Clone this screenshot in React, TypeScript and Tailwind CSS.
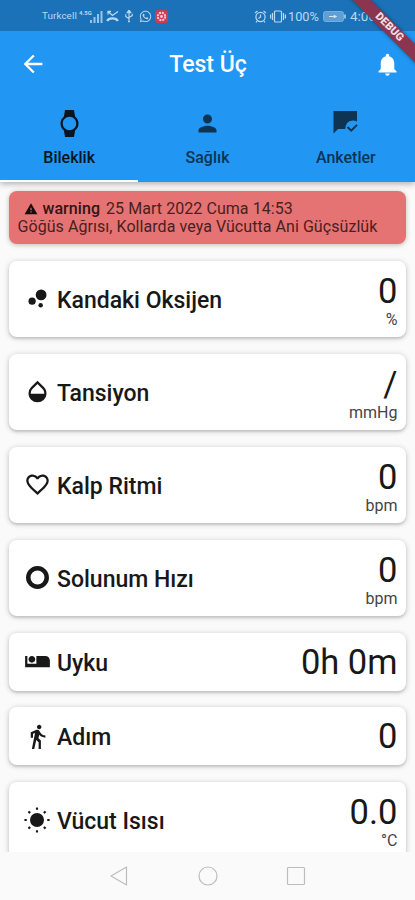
import React from "react";
import {
  MdAirlineSeatIndividualSuite,
  MdArrowBack,
  MdBubbleChart,
  MdDirectionsWalk,
  MdFavoriteBorder,
  MdNotifications,
  MdOpacity,
  MdPerson,
  MdWarning,
  MdWatch,
} from "react-icons/md";
import { FaWhatsapp } from "react-icons/fa";

type Metric = {
  label: string;
  value: string;
  unit?: string;
  icon: React.ReactNode;
};

function RingIcon() {
  return (
    <svg viewBox="0 0 24 24" className="size-[27px]" fill="none" stroke="currentColor" strokeWidth="4">
      <circle cx="12" cy="12" r="8.2" />
    </svg>
  );
}

function SunIcon() {
  const rays = [0, 45, 90, 135, 180, 225, 270, 315];
  return (
    <svg viewBox="0 0 28 28" className="-ml-px size-7" fill="currentColor">
      <circle cx="14" cy="14" r="7" />
      {rays.map((a) => (
        <rect key={a} x="12.900" y={a % 90 === 0 ? 1.4 : 1.9} width="2.200" height="2.400" rx="0.5" transform={`rotate(${a} 14 14)`} />
      ))}
    </svg>
  );
}

function ChatCheckIcon() {
  return (
    <svg viewBox="0 0 25 24" className="h-6 w-[25px]" fill="none">
      <path d="M.5 0H24v10.500c-5.500-3-11.500.5-11.500 6.500L12 18H5L.5 22.500z" fill="currentColor" />
      <path d="M14.500 16l3.700 3.700 5.800-5.800" stroke="currentColor" strokeWidth="2" />
    </svg>
  );
}

const metrics: Metric[] = [
  { label: "Kandaki Oksijen", value: "0", unit: "%", icon: <MdBubbleChart className="size-[27px]" /> },
  { label: "Tansiyon", value: "/", unit: "mmHg", icon: <MdOpacity className="size-[27px]" /> },
  { label: "Kalp Ritmi", value: "0", unit: "bpm", icon: <MdFavoriteBorder className="size-[27px]" /> },
  { label: "Solunum Hızı", value: "0", unit: "bpm", icon: <RingIcon /> },
  { label: "Uyku", value: "0h 0m", icon: <MdAirlineSeatIndividualSuite className="size-[27px]" /> },
  { label: "Adım", value: "0", icon: <MdDirectionsWalk className="size-[27px]" /> },
  { label: "Vücut Isısı", value: "0.0", unit: "°C", icon: <SunIcon /> },
];

const tabs = [
  { label: "Bileklik", icon: <MdWatch className="size-[27px]" />, active: true },
  { label: "Sağlık", icon: <MdPerson className="size-[27px]" />, active: false },
  { label: "Anketler", icon: <ChatCheckIcon />, active: false },
];

function StatusBar() {
  return (
    <div className="flex h-[31px] shrink-0 items-center justify-between bg-[#1b72b9] pt-0.5 pr-[39px] pl-[42px] text-[#b9d8f2]">
      <div className="flex items-center">
        <span className="w-[37px] text-[9.8px] tracking-[0.1px]">Turkcell</span>
        <span className="mb-2 w-[11px] text-[6px] leading-none font-bold">4.5G</span>
        <svg viewBox="0 0 13 13" className="size-[13px]" fill="currentColor">
          <path d="M0 10h2v3H0zM3.500 7h2v6h-2zM7 4h2v9H7zM10.500 1h2v12h-2z" opacity=".8" />
        </svg>
        <svg viewBox="0 0 13 13" className="ml-[3px] size-[13px]" fill="none" stroke="currentColor" strokeWidth="1.300">
          <path d="M2 4.500V1.500h3M2 1.500l4.500 4L12 1.500" />
          <path d="M1.200 11c1.500-3.500 9-3.500 10.600 0" strokeWidth="2.200" />
        </svg>
        <svg viewBox="0 0 10 14" className="ml-[5px] h-[13px] w-2.5" fill="none" stroke="currentColor" strokeWidth="1.200">
          <path d="M5 2v10M5 9.500L1.500 7V4.500M5 8l3.500-2V4" />
          <path d="M3 3l2-3 2 3zM4 12.500h2" fill="currentColor" />
        </svg>
        <FaWhatsapp className="ml-[5px] size-[13px]" />
        <svg viewBox="0 0 13 13" className="ml-[3px] size-[13px]">
          <rect width="13" height="13" rx="3" fill="#cf3b50" />
          <circle cx="6.500" cy="6.500" r="3.700" fill="none" stroke="#f4cdd5" strokeWidth="2" strokeDasharray="2 .9" />
          <circle cx="6.500" cy="6.500" r="1.400" fill="#f4cdd5" />
        </svg>
      </div>
      <div className="flex items-center">
        <svg viewBox="0 0 13 13" className="size-[13px]" fill="none" stroke="currentColor" strokeWidth="1.200">
          <circle cx="6.500" cy="7" r="4.600" />
          <path d="M6.500 4.500V7l-2 1.500M1 3l2.500-2M12 3L9.500 1M3 11l-1 1.500M10 11l1 1.500" />
        </svg>
        <svg viewBox="0 0 16 13" className="ml-[3px] h-[13px] w-4" fill="none" stroke="currentColor" strokeWidth="1.200">
          <rect x="4.500" y="1" width="7" height="11" rx="1" />
          <path d="M2.500 3v7M.6 4.500v4M13.500 3v7M15.400 4.500v4" />
        </svg>
        <span className="ml-0.5 w-[32px] text-[12.8px]">100%</span>
        <svg viewBox="0 0 24 11" className="ml-[3px] h-[11px] w-6">
          <rect x=".5" y=".5" width="20" height="10" rx="2" fill="#5f9fd6" stroke="#72addf" />
          <path d="M22 3.500v4" stroke="currentColor" strokeWidth="1.500" />
          <path d="M6 5.500h4l1-1 2.500 1-2.500 1-1-1" fill="#d3e8fa" stroke="#d3e8fa" />
        </svg>
        <span className="ml-[3px] text-[13.5px]">4:00</span>
      </div>
    </div>
  );
}

function MetricCard({ metric }: { metric: Metric }) {
  return (
    <div
      className={[
        "flex shrink-0 items-center justify-between rounded-lg bg-white pr-[8.500px] pl-[14.500px] shadow-[0_1px_5px_1px_rgba(0,0,0,0.16),0_2px_2px_rgba(0,0,0,0.1)]",
        metric.unit ? "h-[76.500px]" : "h-[58px]",
      ].join(" ")}
    >
      <div className="flex items-center">
        <span className="flex w-[33.500px] items-center">{metric.icon}</span>
        <span className="pt-1 text-[23px] leading-7 font-medium">{metric.label}</span>
      </div>
      <div className={metric.unit ? "flex flex-col items-end pt-[3px]" : "flex flex-col items-end"}>
        <span className="text-[34.5px] leading-[40px]">{metric.value}</span>
        {metric.unit ? <span className="text-[16px] leading-[18px] text-[#444]">{metric.unit}</span> : null}
      </div>
    </div>
  );
}

export default function App() {
  return (
    <div className="relative flex h-[900px] w-[415px] flex-col overflow-hidden bg-[#fafafa] font-[Roboto,sans-serif] text-[#181818]">
      <header className="z-10 flex h-[181.500px] shrink-0 flex-col bg-[#2196f3] shadow-[0_2px_6px_rgba(0,0,0,0.3)]">
        <StatusBar />
        <div className="flex h-[66px] shrink-0 items-center justify-between pr-[14px] pl-[19px] text-white">
          <MdArrowBack className="size-7" />
          <h1 className="pt-0.5 pr-[5px] text-[23px] font-medium">Test Üç</h1>
          <MdNotifications className="size-[27px]" />
        </div>
        <nav className="grid grow grid-cols-3">
          {tabs.map((t) => (
            <div
              key={t.label}
              className={[
                "flex flex-col items-center border-b-[2.500px] pt-3",
                t.active ? "border-white text-[#071522]" : "border-transparent text-[#0d3453]",
              ].join(" ")}
            >
              <span className="flex h-7 items-center">{t.icon}</span>
              <span className="mt-[11px] text-[16px] leading-5 font-medium">{t.label}</span>
            </div>
          ))}
        </nav>
      </header>

      <main className="flex h-[670.500px] shrink-0 flex-col gap-[16.500px] overflow-hidden px-[9px] pt-[9px]">
        <div className="flex h-[53.500px] shrink-0 flex-col justify-center rounded-lg bg-[#e57373] pt-0.5 pl-[8.500px] text-[16px] leading-[18.500px] tracking-[0.06px] text-[#4a2020] shadow-[0_1px_5px_rgba(0,0,0,0.25)]">
          <div className="flex items-center pl-[6px]">
            <MdWarning className="mr-[5px] size-[14px] text-[#1c0b0b]" />
            <span className="mr-1.5 font-medium text-[#351313]">warning</span>
            <span>25 Mart 2022 Cuma 14:53</span>
          </div>
          <div>Göğüs Ağrısı, Kollarda veya Vücutta Ani Güçsüzlük</div>
        </div>
        {metrics.map((m) => (
          <MetricCard key={m.label} metric={m} />
        ))}
      </main>

      {/* Android navigation keys */}
      <footer className="flex grow items-center justify-center gap-[68px] text-[#bdbdbd]">
        <svg viewBox="0 0 20 20" className="size-5" fill="none" stroke="currentColor" strokeWidth="1.200">
          <path d="M16.500 1v18L1 10z" strokeLinejoin="round" />
        </svg>
        <svg viewBox="0 0 20 20" className="size-5" fill="none" stroke="currentColor" strokeWidth="1.200">
          <circle cx="10" cy="10" r="9" />
        </svg>
        <svg viewBox="0 0 20 20" className="size-5" fill="none" stroke="currentColor" strokeWidth="1.200">
          <rect x="1.500" y="1.500" width="17" height="17" rx="1" />
        </svg>
      </footer>

      {/* Debug ribbon */}
      <div className="absolute top-[21px] left-[338.500px] z-20 flex h-[13px] w-[100px] rotate-45 items-center justify-center bg-[#8c3551] text-[11px] font-black text-[#eedde2] shadow-[0_0_4px_rgba(0,0,0,0.4)]">
        DEBUG
      </div>
    </div>
  );
}
